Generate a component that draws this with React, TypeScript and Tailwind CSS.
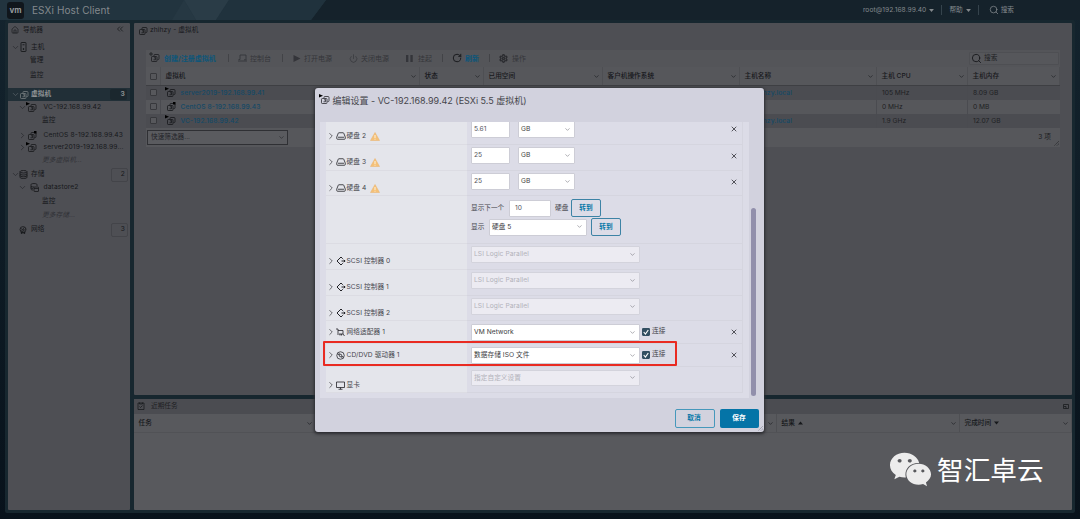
import React from "react";
import { FaWeixin } from "react-icons/fa";
import { ChevronDown, ChevronRight, ChevronsLeft, House, Power, RotateCw, Search, Settings, X } from "lucide-react";

type Mark = "play" | "stop" | "plus" | "none";

function VmIcon({ mark = "none", className = "" }: { mark?: Mark; className?: string }) {
  return (
    <svg viewBox="0 0 22 22" className={`h-[11px] w-[11px] shrink-0 ${className}`} fill="none" stroke="currentColor" strokeWidth="1.6">
      <path d="M10 8V6.500a1.500 1.500 0 0 1 1.500-1.500H18a2 2 0 0 1 2 2v6.500a1.500 1.500 0 0 1-1.500 1.500H17" />
      <rect x="5" y="9" width="11" height="10" rx="1.500" />
      <path d="M9 15.500h4v-5M10 12.500l3-2.500" />
      {mark === "play" && <path d="M0 0l8 3.500-8 3.500z" fill="#000" stroke="none" />}
      {mark === "stop" && <path d="M16 2h5v5h-5z" fill="#000" stroke="none" />}
      {mark === "plus" && <path d="M0 4h8M4 0v8" />}
    </svg>
  );
}

function HostIcon() {
  return (
    <svg viewBox="0 0 14 20" className="h-[10px] w-[7px] shrink-0" fill="none" stroke="currentColor" strokeWidth="1.8">
      <rect x="2" y="1" width="10" height="18" rx="1" />
      <path d="M5 5.500h4" />
      <circle cx="7" cy="14" r="1" fill="currentColor" />
    </svg>
  );
}

function StorageIcon() {
  return (
    <svg viewBox="0 0 18 18" className="h-[9px] w-[9px] shrink-0" fill="none" stroke="currentColor" strokeWidth="1.7">
      <ellipse cx="9" cy="3.500" rx="7" ry="2.500" />
      <path d="M2 3.500v11c0 1.500 3 2.500 7 2.500s7-1 7-2.500v-11M2 7.500c0 1.500 3 2.500 7 2.500s7-1 7-2.500M2 11c0 1.500 3 2.500 7 2.500s7-1 7-2.500" />
    </svg>
  );
}

function DatastoreIcon() {
  return (
    <svg viewBox="0 0 18 18" className="h-[9px] w-[9px] shrink-0" fill="none" stroke="currentColor" strokeWidth="1.6">
      <path d="M14 6V3c0-1-2.500-2-6-2S2 2 2 3v9c0 1 1.500 2 4 2M2 6c0 1 2.500 2 6 2M2 9.500c0 1 1.500 1.500 4 1.500" />
      <rect x="8" y="8" width="9" height="9" rx="1" />
      <path d="M8 11h9" />
    </svg>
  );
}

function NetworkIcon() {
  return (
    <svg viewBox="0 0 18 18" className="h-[8px] w-[8px] shrink-0" fill="none" stroke="currentColor" strokeWidth="1.7">
      <circle cx="9" cy="8" r="6.700" />
      <path d="M3 5l5 3 4-5M8 8l4 1 4-3M10 9l-2 5M3 10l5 2" />
      <circle cx="6" cy="15.500" r="1.500" fill="currentColor" />
      <circle cx="12" cy="15.500" r="1.500" fill="currentColor" />
    </svg>
  );
}

function ConsoleIcon() {
  return (
    <svg viewBox="0 0 18 16" className="h-[8px] w-[9px] shrink-0" fill="none" stroke="currentColor" strokeWidth="1.8">
      <path d="M4 11V2h12v9M0 14h18" />
      <path d="M12 11.500h5M4 11H1" />
    </svg>
  );
}

function TasksIcon() {
  return (
    <svg viewBox="0 0 16 16" className="h-[8px] w-[8px] shrink-0" fill="none" stroke="currentColor" strokeWidth="1.5">
      <path d="M2 2h12v13H2zM5 1v3h6V1M5 9l2 2 4-4" />
    </svg>
  );
}

function DiskIcon() {
  return (
    <svg viewBox="0 0 20 16" className="h-[8px] w-[10px] shrink-0" fill="none" stroke="currentColor" strokeWidth="1.600">
      <path d="M1.500 10L4.500 2.500A1.500 1.500 0 0 1 6 1.500h8a1.500 1.500 0 0 1 1.500 1L18.500 10v3a1.500 1.500 0 0 1-1.500 1.500H3A1.500 1.500 0 0 1 1.500 13zM4 10.500h12" />
    </svg>
  );
}

function ScsiIcon() {
  return (
    <svg viewBox="0 0 20 20" className="h-[10px] w-[10px] shrink-0" fill="none" stroke="currentColor" strokeWidth="2">
      <path d="M13.500 5.500L10 2 2 10l8 8 3.500-3.500M11 10h7.500M15.500 7.500L18 10l-2.500 2.500" />
    </svg>
  );
}

function NicIcon() {
  return (
    <svg viewBox="0 0 18 18" className="h-[9px] w-[9px] shrink-0" fill="none" stroke="currentColor" strokeWidth="1.600">
      <path d="M0 2h4v12M4 5h10v7H6M14 12l3 4M8 12v3M11 12v3" />
    </svg>
  );
}

function DiscIcon() {
  return (
    <svg viewBox="0 0 18 18" className="h-[9px] w-[9px] shrink-0" fill="none" stroke="currentColor" strokeWidth="1.500">
      <circle cx="9" cy="9" r="7.500" />
      <circle cx="9" cy="9" r="2.500" />
      <path d="M3 6l4 2M5 3.500l3 3.500M11 10l4 2M10 11l3 3.500" />
    </svg>
  );
}

function DisplayIcon() {
  return (
    <svg viewBox="0 0 18 18" className="h-[9px] w-[9px] shrink-0" fill="none" stroke="currentColor" strokeWidth="1.600">
      <path d="M1 2h16v11H1zM9 13v3.500M5 16.500h8" />
    </svg>
  );
}

function WarnIcon() {
  return (
    <svg viewBox="0 0 20 18" className="h-[9px] w-[10px] shrink-0">
      <path d="M10 1l9 16H1z" fill="#f5c178" stroke="#e8b06a" strokeLinejoin="round" />
      <path d="M10 6v6M10 13.500v1.700" stroke="#fff8ea" strokeWidth="1.800" />
    </svg>
  );
}

function GripIcon() {
  return (
    <svg viewBox="0 0 6 6" className="h-[5px] w-[5px]" fill="none" stroke="currentColor" strokeWidth="1" strokeDasharray="1 1">
      <path d="M6 0L0 6M6 3L3 6" />
    </svg>
  );
}

function Caret({ className = "h-[2.5px]" }: { className?: string }) {
  return (
    <svg viewBox="0 0 8 5" className={`w-[5px] ${className}`}>
      <path d="M0 0h8L4 5z" fill="currentColor" />
    </svg>
  );
}

function NavRow(props: {
  h: string;
  pad: string;
  chev?: "down" | "right";
  icon?: React.ReactNode;
  label: string;
  badge?: string;
  tone?: string;
}) {
  const { h, pad, chev, icon, label, badge, tone = "" } = props;
  return (
    <div className={`flex shrink-0 items-center ${h} ${pad} ${tone}`}>
      {chev && (
        <span className="flex w-[7px] shrink-0 justify-center text-[#26272b]">
          {chev === "down" ? <ChevronDown size={9} strokeWidth={1.8} className="shrink-0" /> : <ChevronRight size={9} strokeWidth={1.8} className="shrink-0" />}
        </span>
      )}
      {icon}
      <span className="grow whitespace-nowrap">{label}</span>
      {badge && (
        <span className="mr-[2px] flex h-[14px] w-[17px] shrink-0 items-center justify-end rounded-[2px] border border-[#434449] pr-[2px]">
          {badge}
        </span>
      )}
    </div>
  );
}

function HeadCell({ w, label, sort }: { w: string; label: string; sort?: "up" | "down" }) {
  return (
    <div className={`flex items-center border-r border-[#4e4f53] pr-[2px] pl-[4.5px] ${w}`}>
      <span className="whitespace-nowrap">{label}</span>
      {sort && <Caret className={sort === "up" ? "ml-[3px] h-[4px] rotate-180" : "mb-px ml-[3px] h-[4px]"} />}
      <ChevronDown size={7} className="ml-auto" />
    </div>
  );
}

function VmRow(props: { mark: Mark; name: string; host: string; cpu: string; mem: string; bg: string }) {
  return (
    <div className={`flex h-[14px] items-stretch ${props.bg}`}>
      <div className="flex w-[15px] items-center justify-center border-r border-[#4a4b50]">
        <i className="mb-[2px] h-[7px] w-[7px] rounded-[1px] border border-[#37383c] bg-[#57585c]" />
      </div>
      <div className="flex w-[579px] items-center pl-[4px]">
        <VmIcon mark={props.mark} className="mb-px text-[#15171a]" />
        <span className="ml-[4.5px] font-medium tracking-[0.1px] text-[#154966]">{props.name}</span>
      </div>
      <div className="flex w-[137px] items-center border-r border-[#4a4b50] pl-[13px] font-medium tracking-[0.1px] text-[#154966]">{props.host}</div>
      <div className="flex w-[91px] items-center border-r border-[#4a4b50] pl-[5px] text-[#1e1f23]">{props.cpu}</div>
      <div className="flex w-[92px] items-center pl-[5px] text-[#1e1f23]">{props.mem}</div>
    </div>
  );
}

function Select({ w, label, disabled = false, h = "h-[17px]" }: { w: string; label: string; disabled?: boolean; h?: string }) {
  return (
    <div
      className={`flex shrink-0 items-center justify-between rounded-[1px] border pr-[3px] pl-[2px] ${h} ${w} ${
        disabled ? "border-[#d3d3dc] bg-[#ecebf2] text-[#b2b2ba]" : "border-[#cdcdd6] bg-white text-[#3c3c42]"
      }`}
    >
      <span className="tracking-[0.06px] whitespace-nowrap">{label}</span>
      <ChevronDown size={7} className="mb-px text-[#77777f]" />
    </div>
  );
}

function Field({ w, value, pad }: { w: string; value: string; pad: string }) {
  return (
    <div className={`flex h-[17px] shrink-0 items-center rounded-[1px] border border-[#cdcdd6] bg-white text-[#55555c] ${w} ${pad}`}>{value}</div>
  );
}

function Row(props: {
  h: string;
  labelPad: string;
  valuePad: string;
  icon?: React.ReactNode;
  label?: string;
  warn?: boolean;
  remove?: string;
  children: React.ReactNode;
}) {
  return (
    <div className={`flex shrink-0 ${props.h}`}>
      <div className={`flex w-[141px] shrink-0 items-start border-b border-[#dcdce3] bg-[#e4e5eb] ${props.labelPad}`}>
        {props.label && (
          <div className="flex h-[10px] items-center">
            <ChevronRight size={10} strokeWidth={1.8} className="-mr-[0.5px] shrink-0 text-[#3f3f45]" />
            <span className="flex w-[10px] justify-center text-[#222227]">{props.icon}</span>
            <span className="ml-px tracking-[0.08px] whitespace-nowrap">{props.label}</span>
            {props.warn && <span className="ml-1 flex"><WarnIcon /></span>}
          </div>
        )}
      </div>
      <div className={`flex w-[276px] shrink-0 items-start border-r border-b border-[#d5d5df] pl-[4px] ${props.valuePad}`}>
        {props.children}
        {props.remove && (
          <span className={`mr-[4px] ml-auto ${props.remove}`}>
            <X size={8} strokeWidth={2.4} className="text-[#303036]" />
          </span>
        )}
      </div>
    </div>
  );
}

function Connect() {
  return (
    <span className="mt-[3px] ml-[2px] flex h-[9px] items-center">
      <svg viewBox="0 0 14 14" className="mr-[2px] h-[8px] w-[8px]">
        <rect width="14" height="14" rx="2" fill="#324f61" />
        <path d="M3 7l3 3.500 5-7" fill="none" stroke="#fff" strokeWidth="2" />
      </svg>
      连接
    </span>
  );
}

function GoButton({ className }: { className: string }) {
  return (
    <button className={`flex h-[18px] w-[30px] shrink-0 items-center justify-center rounded-[2px] border border-[#3d83a5] font-bold text-[#0878a8] ${className}`}>
      转到
    </button>
  );
}

const Sep = ({ m }: { m: string }) => <span className={`h-[8px] w-px bg-[#424347] ${m}`} />;

export default function App() {
  return (
    <div className="relative flex h-[519px] w-[1080px] flex-col overflow-hidden bg-linear-to-b from-[#14242e] to-[#08121b] font-['Inter','Noto_Sans_CJK_SC',sans-serif] text-[6.67px] leading-none text-[#16181b]">
      <header className="relative flex h-[20px] shrink-0 items-center bg-[#15222b] pl-[7px]">
        <svg className="absolute inset-0" width="1080" height="20">
          <path d="M0 0H326L311 20H0z" fill="#22343f" />
          <path d="M184 0H229L216 20H196z" fill="#2a3c47" />
          <path d="M229 0H326L311 20H216z" fill="#20323d" />
          <path d="M184 0L196 20H172z" fill="#263843" />
        </svg>
        <div className="relative flex h-full w-full items-center text-[#84898d]">
          <span className="flex h-[17px] w-[17px] items-center justify-center rounded-[3px] bg-[#10161c] text-[8px] font-bold text-[#95999b]">vm</span>
          <span className="ml-[8px] text-[10px] tracking-[0.1px]">ESXi Host Client</span>
          <span className="ml-auto tracking-[0.06px]">root@192.168.99.40</span>
          <Caret className="ml-[3px] h-[3px]" />
          <span className="mx-[7px] h-[10px] w-px bg-[#35434c]" />
          <span>帮助</span>
          <Caret className="ml-[3px] h-[3px]" />
          <span className="mr-[10px] ml-[7px] h-[10px] w-px bg-[#35434c]" />
          <Search size={10} strokeWidth={1.8} />
          <span className="mr-[66px] ml-[2px]">搜索</span>
        </div>
      </header>

      <div className="mr-[5px] ml-[5px] flex h-[493px] shrink-0 gap-[4px] rounded-[2px] bg-[#17272f] px-[3px] pt-[3px] pb-[3px]">
        <nav className="flex w-[122px] shrink-0 flex-col overflow-hidden rounded-[1px] bg-[#4e4f54] tracking-[0.13px]">
          <div className="flex h-[14px] shrink-0 items-center pr-[5px] pl-[3px] tracking-normal">
            <House size={8} className="mr-1" />
            <span>导航器</span>
            <ChevronsLeft size={10} strokeWidth={1.8} className="mb-[2px] ml-auto" />
          </div>
          <NavRow h="h-[20px]" pad="pl-[4px]" chev="down" icon={<span className="mr-[4px] ml-px"><HostIcon /></span>} label="主机" />
          <NavRow h="h-[6px]" pad="pl-[22px]" label="管理" />
          <NavRow h="h-[25px]" pad="pl-[22px]" label="监控" />
          <div className="flex h-[13px] shrink-0 items-center bg-[#212f37] pb-px pl-[3px] font-bold text-[#8f9395]">
            <ChevronDown size={9} strokeWidth={1.8} className="text-[#5d666b]" />
            <VmIcon className="-ml-[2px] text-[#777d80]" />
            <span className="ml-[2px] grow">虚拟机</span>
            <span className="mr-[3px] flex h-[11px] w-[17px] items-center justify-end rounded-[2px] bg-[#1b272e] pr-[2px]">3</span>
          </div>
          <NavRow h="h-[12px]" pad="pl-[11px]" chev="down" icon={<VmIcon mark="play" className="mr-[6.5px]" />} label="VC-192.168.99.42" />
          <NavRow h="h-[14px]" pad="pl-[34px]" label="监控" />
          <NavRow h="h-[16px]" pad="pl-[11px]" chev="right" icon={<VmIcon mark="stop" className="mr-[6.5px]" />} label="CentOS 8-192.168.99.43" />
          <NavRow h="h-[9px]" pad="pl-[11px]" chev="right" icon={<VmIcon mark="play" className="mr-[6.5px]" />} label="server2019-192.168.99..." />
          <NavRow h="h-[16px]" pad="pl-[34px]" label="更多虚拟机..." tone="italic text-[#303136]" />
          <NavRow h="h-[13px]" pad="pl-[4px]" chev="down" icon={<span className="mr-[3px]"><StorageIcon /></span>} label="存储" badge="2" />
          <NavRow h="h-[13px]" pad="pl-[11px]" chev="down" icon={<span className="mr-[4.5px] ml-[4px]"><DatastoreIcon /></span>} label="datastore2" />
          <NavRow h="h-[14px]" pad="pl-[34px]" label="监控" />
          <NavRow h="h-[14px]" pad="pl-[34px]" label="更多存储..." tone="italic text-[#303136]" />
          <NavRow h="h-[15px]" pad="pl-[11px]" icon={<span className="mr-[4px]"><NetworkIcon /></span>} label="网络" badge="3" />
        </nav>

        <div className="flex w-[938px] shrink-0 flex-col gap-[4px]">
          <main className="flex h-[372px] shrink-0 flex-col rounded-[1px] bg-[#4e4f54]">
            <div className="flex h-[14px] shrink-0 items-center pl-[3px]">
              <VmIcon />
              <span className="ml-[2px] tracking-[0.1px]">zhihzy - 虚拟机</span>
            </div>
            <section className="mt-[13px] ml-[12px] flex w-[914px] flex-col bg-[#56575b]">
              <div className="flex h-[17px] items-center bg-[#545559] pb-px pl-[3px] text-[7px] text-[#34353a]">
                <VmIcon mark="plus" className="mb-px text-[#1b1c20]" />
                <span className="ml-[4px] w-[52px] font-bold whitespace-nowrap text-[#0c567a]">创建/注册虚拟机</span>
                <Sep m="ml-[12px] mr-[9px]" />
                <ConsoleIcon />
                <span className="ml-[3px]">控制台</span>
                <Sep m="ml-[11px] mr-[10px]" />
                <svg viewBox="0 0 8 8" className="h-[7px] w-[8px]"><path d="M0 0l8 4-8 4z" fill="currentColor" /></svg>
                <span className="ml-[3px]">打开电源</span>
                <Power size={9} strokeWidth={1.800} className="ml-[17px]" />
                <span className="ml-[3px]">关闭电源</span>
                <svg viewBox="0 0 8 8" className="ml-[17px] h-[7px] w-[7px]"><path d="M0 0h2.700v8H0zM5 0h2.700v8H5z" fill="currentColor" /></svg>
                <span className="ml-[5px]">挂起</span>
                <Sep m="ml-[10px] mr-[9px]" />
                <RotateCw size={10} strokeWidth={2.2} className="text-[#151619]" />
                <span className="ml-[3px] font-bold text-[#0c567a]">刷新</span>
                <Sep m="ml-[10px] mr-[9px]" />
                <Settings size={9} strokeWidth={3.5} className="text-[#2a2b2f]" />
                <span className="ml-[4px]">操作</span>
                <div className="mr-px ml-auto flex h-[13px] w-[90px] items-center rounded-[1px] border border-[#4e4f53] bg-[#56575b] pl-[1px]">
                  <Search size={11} strokeWidth={2} className="text-[#18191c]" />
                  <span className="ml-[2px] text-[6.67px] text-[#1e1f23]">搜索</span>
                </div>
              </div>
              <div className="flex h-[19px] items-stretch border-b border-[#3e3f43] font-medium">
                <div className="flex w-[15px] items-center justify-center border-r border-[#4e4f53]">
                  <i className="h-[7px] w-[7px] rounded-[1px] border border-[#37383c]" />
                </div>
                <HeadCell w="w-[259px]" label="虚拟机" />
                <HeadCell w="w-[64px]" label="状态" />
                <HeadCell w="w-[119px]" label="已用空间" />
                <HeadCell w="w-[137px]" label="客户机操作系统" />
                <HeadCell w="w-[137px]" label="主机名称" />
                <HeadCell w="w-[91px]" label="主机 CPU" />
                <HeadCell w="w-[92px]" label="主机内存" />
              </div>
              <VmRow mark="play" name="server2019-192.168.99.41" host="zhihzy.local" cpu="105 MHz" mem="8.09 GB" bg="bg-[#4b4c51]" />
              <VmRow mark="stop" name="CentOS 8-192.168.99.43" host="" cpu="0 MHz" mem="0 MB" bg="bg-[#56575b]" />
              <VmRow mark="play" name="VC-192.168.99.42" host="zhihzy.local" cpu="1.9 GHz" mem="12.07 GB" bg="bg-[#4b4c51]" />
              <div className="flex h-[19px] items-center justify-between pl-px">
                <div className="flex h-[15px] w-[141px] items-center justify-between border border-[#2f3034] bg-[#5a5b5f] pr-[2px] pl-[3px] text-[#232428]">
                  <span>快速筛选器...</span>
                  <ChevronDown size={7} />
                </div>
                <div className="flex h-full items-end text-[#1c1d20]">
                  <span className="mr-[3px] mb-[6px]">3 项</span>
                  <span className="mr-px mb-px"><GripIcon /></span>
                </div>
              </div>
            </section>
          </main>

          <section className="flex h-[111px] shrink-0 flex-col overflow-hidden rounded-[1px] bg-[#58595d]">
            <div className="flex h-[15px] shrink-0 items-center bg-[#4b4c51] pr-[3px] pb-px pl-[3px]">
              <TasksIcon />
              <span className="ml-[6px] text-[#1e1f23]">近期任务</span>
              <svg viewBox="0 0 12 10" className="ml-auto h-[5px] w-[6px]" fill="none" stroke="currentColor" strokeWidth="1.500">
                <path d="M1 1h10v8H1zM2 5h4v4" />
              </svg>
            </div>
            <div className="flex h-[19px] shrink-0 items-stretch border-b border-[#515256] font-medium">
              <HeadCell w="w-[182px]" label="任务" />
              <HeadCell w="w-[461px]" label="" />
              <HeadCell w="w-[183px]" label="结果" sort="up" />
              <HeadCell w="w-[112px]" label="完成时间" sort="down" />
            </div>
          </section>
        </div>
      </div>

      <div className="absolute top-[88px] left-[315px] flex h-[344px] w-[449px] flex-col rounded-[3px] bg-[#d2d2de] text-[#45454b] shadow-[0_1px_3px_1px_#2b2c30]">
        <div className="flex h-[34px] shrink-0 items-center pb-[9px] pl-[4px]">
          <VmIcon mark="play" className="mb-[2px] text-[#2b2b30]" />
          <span className="ml-[2.500px] text-[9px] whitespace-nowrap">编辑设置 - VC-192.168.99.42 (ESXi 5.5 虚拟机)</span>
        </div>
        <div className="flex h-[276px] shrink-0 pl-[5px]">
          <div className="flex w-[429px] flex-col overflow-hidden bg-[#dcdce7] pl-[6px]">
            <Row h="h-[23px]" labelPad="pt-[9px]" valuePad="pt-0" icon={<DiskIcon />} label="硬盘 2" warn remove="mt-[3px]">
              <div className="-mt-px flex gap-[8px]">
                <Field w="w-[39px]" pad="pl-[2px]" value="5.61" />
                <Select w="w-[57px]" label="GB" />
              </div>
            </Row>
            <Row h="h-[26px]" labelPad="pt-[12px]" valuePad="pt-[2px]" icon={<DiskIcon />} label="硬盘 3" warn remove="mt-[5px]">
              <div className="flex gap-[8px]">
                <Field w="w-[39px]" pad="pl-[2px]" value="25" />
                <Select w="w-[57px]" label="GB" />
              </div>
            </Row>
            <Row h="h-[25px]" labelPad="pt-[12px]" valuePad="pt-[2px]" icon={<DiskIcon />} label="硬盘 4" warn remove="mt-[5px]">
              <div className="flex gap-[8px]">
                <Field w="w-[39px]" pad="pl-[2px]" value="25" />
                <Select w="w-[57px]" label="GB" />
              </div>
            </Row>
            <Row h="h-[48px]" labelPad="" valuePad="pt-[3px]">
              <div className="flex flex-col gap-px">
                <div className="flex items-center">
                  <span className="w-[38px]">显示下一个</span>
                  <Field w="w-[42px]" pad="pl-[5px]" value="10" />
                  <span className="mx-[4px] w-[14px] whitespace-nowrap">硬盘</span>
                  <GoButton className="-ml-[2px]" />
                </div>
                <div className="flex items-center">
                  <span className="w-[18px]">显示</span>
                  <Select w="w-[98px]" label="硬盘 5" />
                  <GoButton className="ml-[4px]" />
                </div>
              </div>
            </Row>
            <Row h="h-[26px]" labelPad="pt-[12px]" valuePad="pt-[2px]" icon={<ScsiIcon />} label="SCSI 控制器 0">
              <Select w="w-[169px]" label="LSI Logic Parallel" disabled />
            </Row>
            <Row h="h-[26px]" labelPad="pt-[12px]" valuePad="pt-[2px]" icon={<ScsiIcon />} label="SCSI 控制器 1">
              <Select w="w-[169px]" label="LSI Logic Parallel" disabled />
            </Row>
            <Row h="h-[25px]" labelPad="pt-[12px]" valuePad="pt-[2px]" icon={<ScsiIcon />} label="SCSI 控制器 2">
              <Select w="w-[169px]" label="LSI Logic Parallel" disabled />
            </Row>
            <Row h="h-[23px]" labelPad="pt-[6px]" valuePad="pt-[3px]" icon={<NicIcon />} label="网络适配器 1" remove="mt-[4px]">
              <Select w="w-[169px]" label="VM Network" />
              <Connect />
            </Row>
            <Row h="h-[23px]" labelPad="pt-[6px]" valuePad="pt-[3px]" icon={<DiscIcon />} label="CD/DVD 驱动器 1" remove="mt-[4px]">
              <Select w="w-[169px]" label="数据存储 ISO 文件" />
              <Connect />
            </Row>
            <Row h="h-[26px]" labelPad="pt-[13px]" valuePad="pt-[3px]" icon={<DisplayIcon />} label="显卡">
              <Select w="w-[169px]" label="指定自定义设置" h="h-[16px]" disabled />
            </Row>
          </div>
          <div className="flex w-[10px] items-end pb-[2px] pl-[2px]">
            <span className="h-[188px] w-[5px] rounded-full bg-[#918fab]" />
          </div>
        </div>
        <div className="flex grow items-start justify-end gap-[5px] pt-[11px] pr-[5px] font-bold">
          <button className="flex h-[19px] w-[40px] items-center justify-center rounded-[2px] border border-[#4698bb] pr-[2px] text-[#0878a8]">取消</button>
          <button className="flex h-[19px] w-[39px] items-center justify-center rounded-[2px] bg-[#0474a7] pr-px text-white">保存</button>
        </div>
        <span className="absolute right-px bottom-px text-[#777783]"><GripIcon /></span>
        <div className="absolute top-[253px] left-[8px] h-[25px] w-[354px] rounded-[1px] border-2 border-[#e92b22]" />
      </div>

      <div className="absolute top-[447px] left-[889px] flex h-[44px] items-center text-white">
        <FaWeixin size={43} className="text-[#ececec]" />
        <span className="mt-[2px] ml-[5px] text-[26.7px] whitespace-nowrap">智汇卓云</span>
      </div>
    </div>
  );
}
